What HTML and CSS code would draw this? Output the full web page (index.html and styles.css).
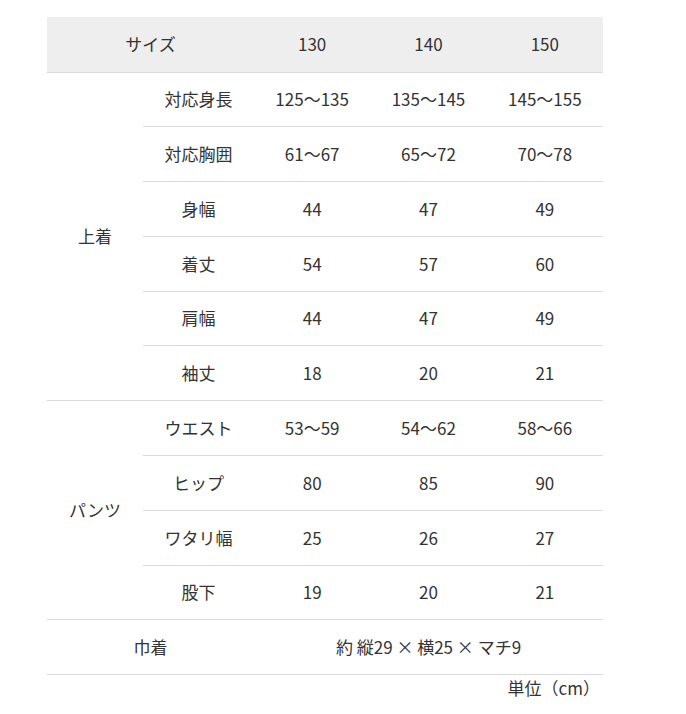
FILE: index.html
```html
<!DOCTYPE html>
<html lang="ja">
<head>
<meta charset="utf-8">
<link rel="stylesheet" href="styles.css">
</head>
<body>
<div class="wrap">
<table class="size-table">
<colgroup>
<col class="c-cat"><col class="c-item"><col class="c-val"><col class="c-val"><col class="c-val">
</colgroup>
<thead>
<tr class="head"><th colspan="2">サイズ</th><th>130</th><th>140</th><th>150</th></tr>
</thead>
<tbody>
<tr><td rowspan="6" class="cat">上着</td><td>対応身長</td><td>125～135</td><td>135～145</td><td>145～155</td></tr>
<tr><td>対応胸囲</td><td>61～67</td><td>65～72</td><td>70～78</td></tr>
<tr><td>身幅</td><td>44</td><td>47</td><td>49</td></tr>
<tr><td>着丈</td><td>54</td><td>57</td><td>60</td></tr>
<tr><td>肩幅</td><td>44</td><td>47</td><td>49</td></tr>
<tr><td>袖丈</td><td>18</td><td>20</td><td>21</td></tr>
<tr><td rowspan="4" class="cat">パンツ</td><td>ウエスト</td><td>53～59</td><td>54～62</td><td>58～66</td></tr>
<tr><td>ヒップ</td><td>80</td><td>85</td><td>90</td></tr>
<tr><td>ワタリ幅</td><td>25</td><td>26</td><td>27</td></tr>
<tr><td>股下</td><td>19</td><td>20</td><td>21</td></tr>
<tr><td colspan="2">巾着</td><td colspan="3">約 縦29 × 横25 × マチ9</td></tr>
</tbody>
</table>
<p class="unit">単位（cm）</p>
</div>
</body>
</html>
```
FILE: styles.css
```css
html, body {
  margin: 0;
  padding: 0;
  background: #fff;
}
body {
  font-family: "Noto Sans CJK JP", "Noto Sans", sans-serif;
  color: #333;
  font-size: 17px;
}
.wrap {
  padding: 17px 0 0 47px;
  width: 556px;
}
.size-table {
  width: 556px;
  border-collapse: collapse;
  table-layout: fixed;
}
.c-cat { width: 96px; }
.c-item { width: 111px; }
.c-val { width: 116.33px; }
.size-table th,
.size-table td {
  height: 53.8px;
  padding: 0;
  text-align: center;
  vertical-align: middle;
  font-weight: 400;
  border-bottom: 1px solid #dcdcdc;
  line-height: 1.2;
}
.head th {
  background: #eeeeee;
  height: 54.5px;
}
.unit {
  margin: 2px 0 0;
  text-align: right;
  padding-right: 3px;
  line-height: 22px;
}
```
